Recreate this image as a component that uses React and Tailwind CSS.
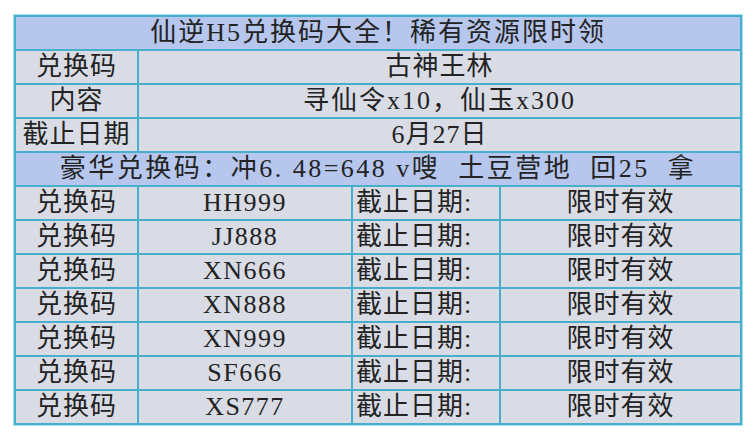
import React from 'react';

const codes = ['HH999', 'JJ888', 'XN666', 'XN888', 'XN999', 'SF666', 'XS777'];

const cell = 'border-2 border-[#47aecb] bg-[#d9dce5] h-[34px] p-0 leading-none';
const head = 'border-2 border-[#47aecb] bg-[#b6c6ec] h-[34px] p-0 leading-none text-center';

function App() {
  return (
    <div
      className="w-[755px] h-[440px] bg-white pt-[15px] pl-[14px] text-[#232323] text-[26px] tracking-[1px]"
      style={{ fontFamily: '"Liberation Serif", "Noto Sans CJK SC", serif' }}
    >
      <table className="w-[726px] table-fixed border-collapse outline outline-1 outline-[#a6e3f2]">
        <colgroup>
          <col className="w-[123px]" />
          <col className="w-[214px]" />
          <col className="w-[148px]" />
          <col className="w-[241px]" />
        </colgroup>
        <tbody>
          {/* title */}
          <tr>
            <td colSpan={4} className={head + ' tracking-[2px]'}>仙逆H5兑换码大全！稀有资源限时领</td>
          </tr>
          <tr>
            <td className={cell + ' text-center'}>兑换码</td>
            <td colSpan={3} className={cell + ' text-center'}>古神王林</td>
          </tr>
          <tr>
            <td className={cell + ' text-center'}>内容</td>
            <td colSpan={3} className={cell + ' text-center tracking-[2px]'}>寻仙令x10，仙玉x300</td>
          </tr>
          <tr>
            <td className={cell + ' text-center'}>截止日期</td>
            <td colSpan={3} className={cell + ' text-center'}>6月27日</td>
          </tr>
          <tr>
            <td colSpan={4} className={head + ' whitespace-pre tracking-[2.5px]'}>豪华兑换码：冲6. 48=648 v嗖  土豆营地  回25  拿</td>
          </tr>
          {codes.map((code) => (
            <tr key={code}>
              <td className={cell + ' text-center'}>兑换码</td>
              <td className={cell + ' text-center tracking-[1.5px]'}>{code}</td>
              <td className={cell + ' pl-[3px]'}>截止日期:</td>
              <td className={cell + ' text-center'}>限时有效</td>
            </tr>
          ))}
        </tbody>
      </table>
    </div>
  );
}

export default App;
